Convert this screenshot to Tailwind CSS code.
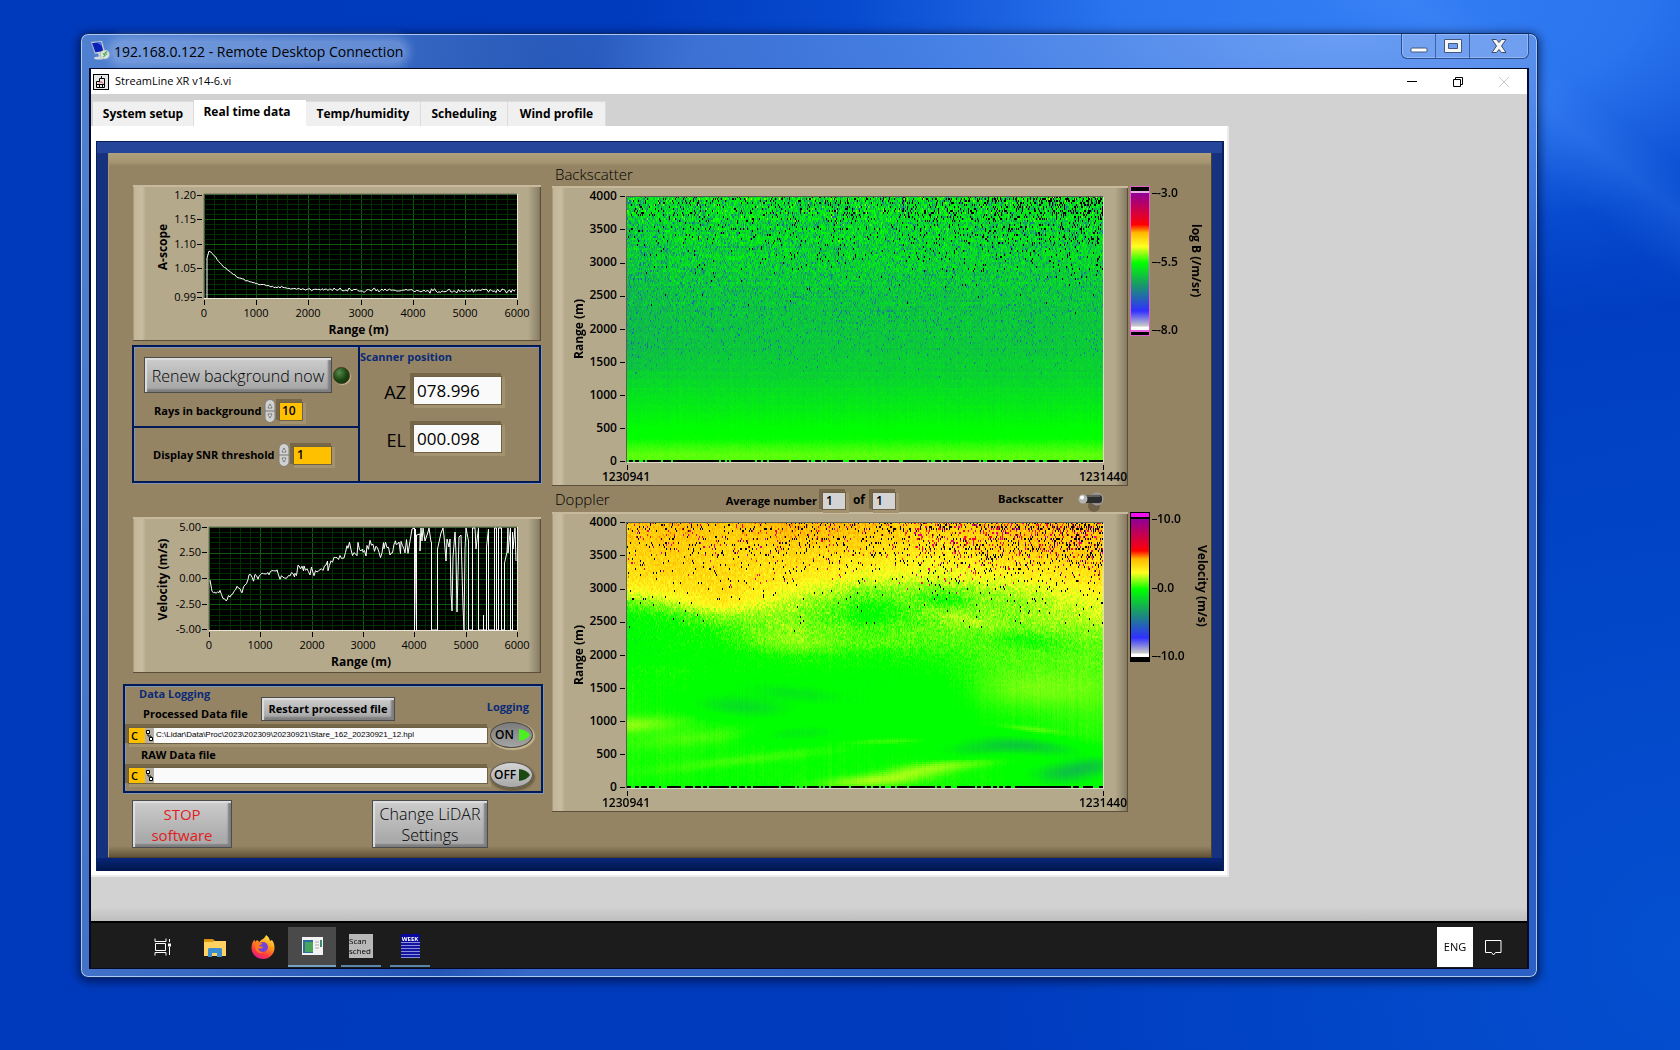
<!DOCTYPE html>
<html lang="en">
<head>
    <meta charset="UTF-8">
    <meta name="viewport" content="width=device-width, initial-scale=1.0">
    <title>192.168.0.122 - Remote Desktop Connection</title>
    <script src="https://cdn.jsdelivr.net/npm/@tailwindcss/browser@4"></script>
    <style>
        body {
            font-family: "Open Sans", "Noto Sans", sans-serif;
            background:
                linear-gradient(38deg, transparent 88%, rgba(80, 150, 255, 0.2) 91%, transparent 93%),
                radial-gradient(ellipse 760px 330px at 1380px 0, #347ef4 0%, #2a74ee 35%, rgba(10, 80, 214, 0.7) 70%, transparent 100%),
                radial-gradient(ellipse 700px 700px at 1680px 950px, #0450d0 0%, transparent 100%),
                linear-gradient(90deg, #003abc, #003cc0);
        }
        .glass {
            background:
                radial-gradient(ellipse 800px 260px at 1260px 0, #6a9ef4 0%, rgba(74, 132, 232, 0.9) 50%, transparent 100%),
                linear-gradient(100deg, #5080d0 0, #2456b8 32%, #3668c8 38%, #2a5fc4 60%, #2c60c4 100%);
        }
        .frame-blue {
            background: linear-gradient(#24459a, #24459a) top / 100% 12px no-repeat,
                linear-gradient(#08267a, #001648) bottom / 100% 13px no-repeat,
                #16317e;
            box-shadow: inset -2px 1px 0 #08205c, inset 1px 0 0 #08205c;
        }
        .panel-tan {
            background: linear-gradient(#b0a07c, #a59571 70%, #948464) top / 100% 13px no-repeat,
                linear-gradient(#948464, #5c4e34) bottom / 100% 12px no-repeat,
                #948464;
            box-shadow: inset -1px -1px 0 #4c422c, inset 1px 0 0 #a89874;
        }
        .plot-panel {
            background: linear-gradient(90deg, #c2b497, #c9bca1 70%, #b5a98c) left / 13px 100% no-repeat,
                linear-gradient(90deg, #b5a98c, #8d8369 80%, #736a54) right / 13px 100% no-repeat,
                #b5a98c;
            box-shadow: inset 0 2px 0 #c6b99c, inset -1px -1px 0 #5b4f3c, inset 1px 0 0 #a89a7c;
        }
        .recess {
            box-shadow: 0 0 0 1px #6f6144, -2px -2px 0 2px #756748, 2px 2px 0 2px #a39270;
        }
        .silver {
            background: linear-gradient(#cdcdcd, #a9a9a9 85%, #b8b8b8);
            border: 1px solid #4c4c4c;
            box-shadow: inset 2px 2px 1px #dedede, inset -3px -3px 2px #7e7e7e;
        }
        .blue-box {
            border: 2px solid #001a58;
            box-shadow: inset 1px 1px 0 #7e93b8, 1px 1px 0 #8497b4;
        }
        .vtext { writing-mode: vertical-rl; }
    </style>
</head>
<body class="min-h-screen flex pt-[33px] pl-20 pr-[142px] pb-[72px] text-black">

<main class="glass flex-1 flex flex-col rounded-lg border border-[#0c2a66] px-2 pb-2 shadow-[0_2px_10px_2px_rgba(0,0,30,0.55),inset_0_0_0_1px_#a9c8f5]">
    <!-- Remote desktop caption -->
    <header class="flex h-[34px] items-start">
        <svg class="ml-px mt-1.5 size-[20px]" viewBox="0 0 20 20">
            <path d="M1 2 12 1l3 11-10 2z" fill="#dfe6ee" stroke="#8898b0" stroke-width=".6"/>
            <path d="M2 3l9-1 2.400 9-8 1.500z" fill="#0a1fb4"/>
            <path d="M7 2.500l4-.4 1 4z" fill="#4a7cf0"/>
            <path d="M8 13l4-.6 1 4-4 1z" fill="#c8d0d8"/>
            <ellipse cx="9" cy="18" rx="5" ry="1.600" fill="#d4dae0"/>
            <circle cx="15" cy="14.500" r="4.500" fill="#e2ebe0" stroke="#98a89c" stroke-width=".6"/>
            <path d="M13 13.500l2 1.500-1.500 2M17 11.500l-2 1.500 2 1.500" fill="none" stroke="#38a038" stroke-width="1.200"/>
        </svg>
        <h1 class="ml-0.5 mt-[7px] rounded-full bg-[#a8c4f0]/40 px-0.5 text-[14px] leading-[22px] shadow-[0_0_8px_5px_rgba(168,196,240,0.4)]">192.168.0.122 - Remote Desktop Connection</h1>
        <div class="ml-auto flex h-[25px] rounded-b-md border border-t-0 border-[#2c4f92] bg-[#7fa9f2]/60 shadow-[inset_0_0_0_1px_#94b8f4]">
            <button class="grid w-[34px] place-items-center border-r border-[#3c62a8]" aria-label="Minimize">
                <svg class="size-[20px]" viewBox="0 0 20 20"><rect x="2" y="12" width="16" height="4" rx="1" fill="#fff" stroke="#46587a"/></svg>
            </button>
            <button class="grid w-[34px] place-items-center border-r border-[#3c62a8]" aria-label="Maximize">
                <svg class="size-[20px]" viewBox="0 0 20 20"><path d="M1.500 3.500h17v13h-17zM5.500 7.500v5h9v-5z" fill="#f4f6fa" fill-rule="evenodd" stroke="#46587a"/></svg>
            </button>
            <button class="grid w-[58px] place-items-center" aria-label="Close">
                <svg class="size-[20px]" viewBox="0 0 20 20"><path d="M3 3.500h4.500L10 6.500l2.500-3H17L12.500 10 17 16.500h-4.500L10 13.500l-2.500 3H3L7.500 10z" fill="#f4f4f4" stroke="#3c4c6c"/></svg>
            </button>
        </div>
    </header>

    <div class="flex flex-1 flex-col border-x-2 border-y border-[#000a28] bg-[#d2d2d2]">
        <!-- Application title bar -->
        <div class="flex h-[25px] items-center bg-white pl-0.5 text-[11px]">
            <svg class="size-[16px]" viewBox="0 0 16 16" fill="none" stroke="#000">
                <rect x=".5" y=".5" width="15" height="15" fill="#e8e8e8"/>
                <path d="M3.500 13.500v-6h3v-3h5v9zM3.500 10.500h8M8.500 4v-2M6.500 13v-2.500M9.500 13v-2.500"/>
                <path d="M6 9.500l2-2 2 2" stroke="#d03030"/>
            </svg>
            <span class="ml-1.5">StreamLine XR v14-6.vi</span>
            <button class="ml-auto mr-[34px] w-3" aria-label="Minimize window"><svg class="size-3" viewBox="0 0 12 12"><path d="M1 5.500h10" stroke="#000"/></svg></button>
            <button class="mr-[34px] w-3" aria-label="Restore window"><svg class="size-3" viewBox="0 0 12 12" fill="none" stroke="#000"><path d="M1.500 3.500h7v7h-7zM3.500 3.500v-2h7v7h-2"/></svg></button>
            <button class="mr-[17px] w-3" aria-label="Close window"><svg class="size-3" viewBox="0 0 12 12"><path d="M1 1l10 10M11 1L1 11" stroke="#ccc"/></svg></button>
        </div>

        <nav class="mt-1.5 flex h-[26px] items-end pl-[2px] text-[12px] font-bold">
            <button class="h-[25px] w-[101px] border-t border-r border-[#dcdcdc] bg-[#f0f0f0]">System setup</button>
            <button class="h-[26px] w-[112px] bg-white pb-0.5 pr-1.5">Real time data</button>
            <button class="h-[25px] w-[115px] border-t border-r border-[#dcdcdc] bg-[#f0f0f0]">Temp/humidity</button>
            <button class="h-[25px] w-[87px] border-t border-r border-[#dcdcdc] bg-[#f0f0f0]">Scheduling</button>
            <button class="h-[25px] w-[98px] border-t border-r border-[#dcdcdc] bg-[#f0f0f0]">Wind profile</button>
        </nav>

        <div class="w-fit border-r-2 border-b-2 border-[#ececec] bg-white pt-[15px] pr-[3px] pb-1 pl-[5px]">
            <div class="frame-blue px-3 pt-3 pb-[13px]">
                <div class="panel-tan flex pt-2.5 pb-2.5 pl-[15px]">
                    <!-- Left column -->
                    <div class="w-[420px] pt-[22px]">
                        <div class="plot-panel ml-[10px] w-[408px]">
                            <svg id="ascope" class="block h-[156px] w-full" viewBox="0 0 408 156"></svg>
                        </div>

                        <div class="blue-box mt-1 ml-[9px] flex h-[138px] w-[409px]">
                            <div class="w-[226px] border-r-2 border-[#001a58]">
                                <div class="h-[81px] border-b-2 border-[#001a58] pt-2.5 pl-2.5">
                                    <div class="flex items-center">
                                        <button class="silver h-[36px] w-[188px] pt-px text-[16px] font-light">Renew background now</button>
                                        <span class="ml-px size-[17px] rounded-full border border-[#3c3a22] bg-radial-[at_35%_30%] from-[#5a8a4c] via-[#1c4a14] to-[#0c2408] shadow-[1px_1px_1px_#c8b890]"></span>
                                    </div>
                                    <div class="mt-1.5 flex items-center pl-2.5">
                                        <label for="rays" class="w-[110px] whitespace-nowrap text-[11px] font-bold">Rays in background</label>
                                        <svg class="h-6 w-3" viewBox="0 0 12 24"><use href="#spinner"/></svg>
                                        <input id="rays" class="recess ml-1 h-[17px] w-[22px] bg-[#ffc000] pl-0.5 text-[12px] font-semibold" value="10">
                                    </div>
                                </div>
                                <div class="flex items-center pt-[15px] pl-[19px]">
                                    <label for="snr" class="w-[125px] whitespace-nowrap text-[11px] font-bold">Display SNR threshold</label>
                                    <svg class="h-6 w-3" viewBox="0 0 12 24"><use href="#spinner"/></svg>
                                    <input id="snr" class="recess ml-1 h-[17px] w-[37px] bg-[#ffc000] pl-[3px] text-[12px] font-semibold" value="1">
                                </div>
                            </div>
                            <div class="flex-1 pt-0.5">
                                <h2 class="text-[11px] font-bold leading-[16px] text-[#0a2a78]">Scanner position</h2>
                                <div class="mt-2.5 flex items-center">
                                    <label for="az" class="w-[54px] pr-2 pt-1 text-right text-[18px]">AZ</label>
                                    <input id="az" class="recess h-[27px] w-[87px] bg-[#fafafa] pl-[3px] text-[17px]" value="078.996">
                                </div>
                                <div class="mt-[17px] flex items-center">
                                    <label for="el" class="w-[54px] pr-2 pt-1 text-right text-[18px]">EL</label>
                                    <input id="el" class="recess h-[27px] w-[87px] bg-[#fafafa] pl-[3px] text-[17px]" value="000.098">
                                </div>
                            </div>
                        </div>

                        <div class="plot-panel mt-[34px] ml-[10px] w-[408px]">
                            <svg id="velocity" class="block h-[156px] w-full" viewBox="0 0 408 156"></svg>
                        </div>

                        <div class="blue-box mt-[11px] h-[109px] pl-1 text-[11px] font-bold leading-[16px]">
                            <div class="flex">
                                <div class="w-[132px]">
                                    <h2 class="pl-2.5 text-[#0a2a78]">Data Logging</h2>
                                    <label for="proc" class="mt-1 block whitespace-nowrap pl-3.5">Processed Data file</label>
                                </div>
                                <button class="silver mt-[11px] h-6 w-[134px] text-[11px] font-bold leading-[16px]">Restart processed file</button>
                                <span class="ml-auto mt-[13px] mr-3 text-[#0a2a78]">Logging</span>
                            </div>
                            <div class="flex items-center">
                                <div class="recess flex h-[15px] w-[358px]">
                                    <span class="w-4 bg-[#ffc000] pl-0.5 text-[11px] font-semibold">C</span>
                                    <svg class="h-[15px] w-[9px] bg-[#b4b0a4]" viewBox="0 0 9 15"><use href="#path-icon"/></svg>
                                    <input id="proc" class="min-w-0 flex-1 bg-[#fafafa] pl-0.5 font-['Liberation_Sans'] text-[8px] font-normal" value="C:\Lidar\Data\Proc\2023\202309\20230921\Stare_162_20230921_12.hpl">
                                </div>
                                <button class="ml-[3px] flex h-[26px] w-[43px] items-center rounded-[50%] border border-[#4c4a44] bg-linear-to-b from-[#7c7c7c] to-[#a4a4a4] pl-1 text-[12px] font-semibold shadow-[1px_1px_1px_1px_#c4b68e]">ON
                                    <svg class="ml-1 size-3" viewBox="0 0 12 12"><path d="M1 0Q9 1 12 6 9 11 1 12z" fill="#4cf020"/></svg>
                                </button>
                            </div>
                            <label for="raw" class="block -mt-px pl-3">RAW Data file</label>
                            <div class="-mt-px flex items-center">
                                <div class="recess flex h-[15px] w-[358px]">
                                    <span class="w-4 bg-[#ffc000] pl-0.5 text-[11px] font-semibold">C</span>
                                    <svg class="h-[15px] w-[9px] bg-[#b4b0a4]" viewBox="0 0 9 15"><use href="#path-icon"/></svg>
                                    <input id="raw" class="min-w-0 flex-1 bg-[#fafafa] pl-0.5 text-[8px]" value="">
                                </div>
                                <button class="ml-[3px] flex h-[26px] w-[43px] items-center rounded-[50%] border border-[#5c5a54] bg-linear-to-b from-[#d4d4d4] to-[#a8a8a8] pl-[3px] text-[12px] font-semibold shadow-[1px_2px_2px_1px_#6c5e42]">OFF
                                    <svg class="ml-0.5 size-3" viewBox="0 0 12 12"><path d="M1 0Q9 1 12 6 9 11 1 12z" fill="#1c4814"/></svg>
                                </button>
                            </div>
                        </div>

                        <div class="mt-[7px] flex justify-between pl-[9px] pr-[55px] text-[15px] leading-[21px]">
                            <button class="silver h-12 w-[100px] pt-0.5 text-[#e02020]">STOP<br>software</button>
                            <button class="silver h-12 w-[116px] pt-0.5 text-[16px] font-light">Change LiDAR<br>Settings</button>
                        </div>
                    </div>

                    <!-- Right column -->
                    <div class="ml-[9px] w-[576px]">
                        <h2 class="pl-[3px] text-[15px] leading-[23px] font-light">Backscatter</h2>
                        <div class="plot-panel h-[300px] pt-2.5">
                            <div class="flex h-[267px]">
                                <span class="vtext w-[37px] rotate-180 pr-[19px] text-center text-[12px] font-bold leading-[16px]">Range (m)</span>
                                <div class="-my-2 flex h-[281px] w-[37px] flex-col justify-between pr-px text-right text-[12px] font-semibold leading-[16px]">
                                    <span>4000 <i class="inline-block h-px w-[5px] bg-black align-middle"></i></span>
                                    <span>3500 <i class="inline-block h-px w-[5px] bg-black align-middle"></i></span>
                                    <span>3000 <i class="inline-block h-px w-[5px] bg-black align-middle"></i></span>
                                    <span>2500 <i class="inline-block h-px w-[5px] bg-black align-middle"></i></span>
                                    <span>2000 <i class="inline-block h-px w-[5px] bg-black align-middle"></i></span>
                                    <span>1500 <i class="inline-block h-px w-[5px] bg-black align-middle"></i></span>
                                    <span>1000 <i class="inline-block h-px w-[5px] bg-black align-middle"></i></span>
                                    <span>500 <i class="inline-block h-px w-[5px] bg-black align-middle"></i></span>
                                    <span>0 <i class="inline-block h-px w-[5px] bg-black align-middle"></i></span>
                                </div>
                                <canvas id="backscatter-map" width="476" height="265" class="h-[267px] w-[478px] border-t border-l border-t-[#56604c] border-l-[#56604c] border-r border-b border-r-[#dcdccc] border-b-[#dcdccc]"></canvas>
                            </div>
                            <div class="mt-0.5 flex justify-between pl-[75px] pr-6"><i class="h-[5px] w-px bg-black"></i><i class="h-[5px] w-px bg-black"></i></div>
                            <div class="flex justify-between pl-[50px] pr-px text-[12px] font-semibold leading-[14px]"><span>1230941</span><span>1231440</span></div>
                        </div>

                        <div class="flex h-[26px] items-center pl-[3px]">
                            <h2 class="text-[15px] leading-[23px] font-light">Doppler</h2>
                            <label for="avg" class="ml-auto mr-1.5 whitespace-nowrap pt-1 text-[11px] font-bold">Average number</label>
                            <input id="avg" class="recess mt-1 h-[16px] w-[22px] bg-[#d4d4d4] pl-[3px] text-[12px] font-semibold" value="1">
                            <label for="avg-of" class="mx-2 pt-0.5 text-[12px] font-bold leading-[16px]">of</label>
                            <input id="avg-of" class="recess mt-1 h-[16px] w-[22px] bg-[#d4d4d4] pl-[3px] text-[12px] font-semibold" value="1">
                            <label for="mode" class="ml-[103px] w-[66px] whitespace-nowrap text-[11px] font-bold">Backscatter</label>
                            <button id="mode" class="ml-3.5 mr-[23px]" aria-label="Backscatter">
                                <svg class="mt-1 h-[24px] w-[27px]" viewBox="0 0 27 24">
                                    <ellipse cx="16" cy="17" rx="6" ry="6" fill="#6f6249"/>
                                    <circle cx="19" cy="10" r="6" fill="#8c8c8c" stroke="#a4a4a4"/>
                                    <rect x="4" y="6" width="20" height="8" rx="3" fill="#2c2c2c"/>
                                    <path d="M5 7h17" stroke="#606060" stroke-width="2"/>
                                    <circle cx="5" cy="10" r="4.500" fill="#b4b4b4"/><circle cx="4" cy="8.500" r="2" fill="#fff"/>
                                </svg>
                            </button>
                        </div>

                        <div class="plot-panel h-[300px] pt-2.5">
                            <div class="flex h-[267px]">
                                <span class="vtext w-[37px] rotate-180 pr-[19px] text-center text-[12px] font-bold leading-[16px]">Range (m)</span>
                                <div class="-my-2 flex h-[281px] w-[37px] flex-col justify-between pr-px text-right text-[12px] font-semibold leading-[16px]">
                                    <span>4000 <i class="inline-block h-px w-[5px] bg-black align-middle"></i></span>
                                    <span>3500 <i class="inline-block h-px w-[5px] bg-black align-middle"></i></span>
                                    <span>3000 <i class="inline-block h-px w-[5px] bg-black align-middle"></i></span>
                                    <span>2500 <i class="inline-block h-px w-[5px] bg-black align-middle"></i></span>
                                    <span>2000 <i class="inline-block h-px w-[5px] bg-black align-middle"></i></span>
                                    <span>1500 <i class="inline-block h-px w-[5px] bg-black align-middle"></i></span>
                                    <span>1000 <i class="inline-block h-px w-[5px] bg-black align-middle"></i></span>
                                    <span>500 <i class="inline-block h-px w-[5px] bg-black align-middle"></i></span>
                                    <span>0 <i class="inline-block h-px w-[5px] bg-black align-middle"></i></span>
                                </div>
                                <canvas id="doppler-map" width="476" height="265" class="h-[267px] w-[478px] border-t border-l border-t-[#56604c] border-l-[#56604c] border-r border-b border-r-[#dcdccc] border-b-[#dcdccc]"></canvas>
                            </div>
                            <div class="mt-0.5 flex justify-between pl-[75px] pr-6"><i class="h-[5px] w-px bg-black"></i><i class="h-[5px] w-px bg-black"></i></div>
                            <div class="flex justify-between pl-[50px] pr-px text-[12px] font-semibold leading-[14px]"><span>1230941</span><span>1231440</span></div>
                        </div>
                    </div>

                    <!-- Colour scales -->
                    <div class="w-[84px] pt-[23px] pl-0.5 text-[12px] font-semibold leading-[16px]">
                        <div class="flex h-[326px]">
                            <div class="h-[150px] w-5 border border-[#e060d0] bg-black pt-1 pb-[3px]">
                                <div class="h-full border-y-2 border-t-[#e8b0e0] border-b-[#e860d8] bg-[linear-gradient(#900098,#f00018_20%,#ff0000_23%,#ffb800_29%,#ffff20_39%,#00ff00_51%,#18a060_66%,#3030ff_86%,#c8c8c8_97%,#fff_98%)]"></div>
                            </div>
                            <div class="-mt-px flex h-[153px] w-[38px] flex-col justify-between pl-0.5">
                                <span><i class="inline-block h-px w-[5px] bg-black align-middle"></i>-3.0</span>
                                <span><i class="inline-block h-px w-[5px] bg-black align-middle"></i>-5.5</span>
                                <span><i class="inline-block h-px w-[5px] bg-black align-middle"></i>-8.0</span>
                            </div>
                            <span class="vtext mt-[38px] text-[12px] font-bold leading-[16px]">log B (/m/sr)</span>
                        </div>
                        <div class="flex">
                            <div class="h-[150px] w-5 border border-black bg-black pb-1">
                                <div class="h-1 bg-[#f010f0]"></div>
                                <div class="mt-0.5 h-[138px] bg-[linear-gradient(#900098,#f00018_20%,#ff0000_23%,#ffb800_29%,#ffff20_39%,#00ff00_51%,#18a060_66%,#3030ff_86%,#c8c8c8_97%,#fff_98%)]"></div>
                            </div>
                            <div class="-mt-px flex h-[153px] w-[44px] flex-col justify-between whitespace-nowrap pl-0.5">
                                <span><i class="inline-block h-px w-[5px] bg-black align-middle"></i>10.0</span>
                                <span><i class="inline-block h-px w-[5px] bg-black align-middle"></i>0.0</span>
                                <span><i class="inline-block h-px w-[5px] bg-black align-middle"></i>-10.0</span>
                            </div>
                            <span class="vtext mt-[33px] whitespace-nowrap text-[12px] font-bold leading-[16px]">Velocity (m/s)</span>
                        </div>
                    </div>
                </div>
            </div>
        </div>
        <div class="mt-auto h-3.5 bg-linear-to-b from-[#d2d2d2] to-[#bebebe]"></div>

        <!-- Taskbar -->
        <footer class="flex h-[47px] gap-px border-t-2 border-black bg-[#1c1c1c] pt-1 pl-12">
            <button class="grid h-10 w-12 place-items-center" aria-label="Task view">
                <svg class="size-[18px]" viewBox="0 0 18 18" fill="none" stroke="#fff"><path d="M1 .5v3h11v-3M1 17.500v-3h11v3M1.500 5.500h10v7h-10zM15.500 1v3M15.500 9v8"/><path d="M14 5.500h3v3h-3z" fill="#fff" stroke="none"/></svg>
            </button>
            <button class="ml-0.5 grid h-10 w-12 place-items-center" aria-label="File Explorer">
                <svg class="h-[19px] w-[23px]" viewBox="0 0 23 19"><path d="M1 1h9l2 2h-11z" fill="#d08a10"/><path d="M1 3h22v15H1z" fill="#ffd262"/><path d="M1 2h8l2 2H1z" fill="#e09b10"/><path d="M5 19v-8l1-1h12l1 1v8h-5v-4h-5v4z" fill="#3c8ed0"/></svg>
            </button>
            <button class="grid h-10 w-12 place-items-center" aria-label="Firefox">
                <svg class="size-6" viewBox="0 0 24 24">
                    <defs><linearGradient id="fox" x1=".8" y1="0" x2=".3" y2="1"><stop offset="0" stop-color="#fff04a"/><stop offset=".4" stop-color="#ff9a1c"/><stop offset=".75" stop-color="#ff3b3f"/><stop offset="1" stop-color="#e01890"/></linearGradient></defs>
                    <path d="M15 0c3 2 3.500 4 4 6l2-1c2 3 2.500 5 2.500 8A11.500 11 0 0 1 .5 13C.5 9 2 6 3.500 4.500L4 7l2-2 2.500 2C10 4 14 4 15 0z" fill="url(#fox)"/>
                    <circle cx="12" cy="12" r="5" fill="#7244d8"/><path d="M4 8c3-2 5-1 8 1-2 0-3 1-4 2 2 1 3 0 4 1-1 2-4 2-5 1 0 3 3 5 6 4-4 3-10 0-9-9z" fill="#ff7a1c"/>
                </svg>
            </button>
            <button class="grid h-10 w-12 place-items-center border-b-2 border-[#76a0c4] bg-[#4a4a4a]" aria-label="StreamLine">
                <svg class="h-[18px] w-[21px]" viewBox="0 0 21 18"><path d="M0 0h21v18H0z" fill="#f2f2f2"/><path d="M1 3h10v13H1z" fill="#2c6ca0"/><path d="M3 5h8v10H3z" fill="#4aa45c"/><path d="M13 5h4M13 8h4M13 11h4" stroke="#aaa"/><path d="M18 3h2v7h-2z" fill="#3c8c70"/></svg>
            </button>
            <button class="ml-1 grid h-10 w-10 place-items-center border-b-2 border-[#5c84a8]" aria-label="Scan sched">
                <span class="h-6 w-6 bg-[#b8b8b8] pt-0.5 text-left text-[8px] leading-[10px]">Scan<br>sched</span>
            </button>
            <button class="ml-2 grid h-10 w-10 place-items-center border-b-2 border-[#5c84a8]" aria-label="Week">
                <span class="h-6 w-[19px] bg-[linear-gradient(#0808a0_35%,transparent_35%),repeating-linear-gradient(#1414a0_0_2px,#8890d8_2px_3px)] text-center text-[6px] font-bold leading-[10px] text-white">WEEK</span>
            </button>
            <button class="ml-auto h-10 w-9 bg-white text-[11px]">ENG</button>
            <button class="mr-[7px] grid h-10 w-[46px] place-items-center pr-2" aria-label="Notifications">
                <svg class="size-[17px]" viewBox="0 0 17 17" fill="none" stroke="#fff"><path d="M.5 1.500h15.500v12h-5.500l-2 2.500-2-2.500H.5z"/></svg>
            </button>
        </footer>
    </div>
</main>

<svg class="hidden">
    <symbol id="spinner" viewBox="0 0 12 24">
        <rect x="1" y=".5" width="10" height="23" rx="5" fill="#d0d0d0" stroke="#807c74"/>
        <path d="M1 12h10" stroke="#777"/>
        <path d="M4 9l2-4 2 4zM4 15l2 4 2-4z" fill="#eee" stroke="#555" stroke-width=".7"/>
    </symbol>
    <symbol id="path-icon" viewBox="0 0 9 15">
        <path d="M1.500 2.500h3v3h-3zM4.500 9.500h3v3h-3zM3 5.500v2.500h3v1.500" fill="#fff" stroke="#000"/>
    </symbol>
</svg>

<script>
    // Small seeded generator so the traces are stable between loads
    let seed = 20230921;
    function rnd() {
        seed = (seed * 1664525 + 1013904223) >>> 0;
        return seed / 4294967296;
    }
    const gauss = () => rnd() + rnd() + rnd() + rnd() - 2;

    function drawChart(id, opt) {
        const { x0, x1, y0, y1 } = opt;
        let out = `<rect x="${x0}" y="${y0}" width="${x1 - x0}" height="${y1 - y0}" fill="#000"/>`;
        for (let i = 0; i <= 30; i++) {
            const x = Math.round(x0 + (x1 - x0) * i / 30) + 0.5;
            out += `<path d="M${x} ${y0}V${y1}" stroke="${i % 5 ? '#003000' : '#0c5c14'}"/>`;
        }
        for (let i = 0; i * opt.minor < y1 - y0; i++) {
            const y = Math.round(y0 + opt.minor * i) + 0.5;
            out += `<path d="M${x0} ${y}H${x1}" stroke="${i % 5 ? '#003000' : '#0c5c14'}"/>`;
        }
        out += `<path d="M${x0} ${y1}V${y0}H${x1}" fill="none" stroke="#6c6858"/><path d="M${x0} ${y1 + 0.5}H${x1 + 0.5}V${y0}" fill="none" stroke="#ece6d6"/>`;
        out += opt.labels.map(([y, t]) => `<text x="${x0 - 8}" y="${y + 4}" text-anchor="end">${t}</text><path d="M${x0 - 7} ${y + 0.5}h5" stroke="#000"/>`).join('');
        for (let i = 0; i <= 6; i++) {
            const x = Math.round(x0 + (x1 - x0) * i / 6);
            out += `<path d="M${x + 0.5} ${y1 + 2}v5" stroke="#000"/><text x="${x}" y="${y1 + 19}" text-anchor="middle">${i * 1000}</text>`;
        }
        out += `<text x="${(x0 + x1) / 2 - 2}" y="149" text-anchor="middle" font-weight="700" font-size="12">Range (m)</text>`;
        out += `<text transform="translate(34 ${(y0 + y1) / 2 + 1}) rotate(-90)" text-anchor="middle" font-weight="700" font-size="12">${opt.title}</text>`;
        const pts = opt.points.map(([x, y]) => `${(x0 + x).toFixed(1)},${Math.max(y0 + 1, Math.min(y1, y0 + y)).toFixed(1)}`).join(' ');
        out += `<polyline points="${pts}" fill="none" stroke="#fff"/>`;
        const svg = document.getElementById(id);
        svg.setAttribute('font-size', '11');
        svg.innerHTML = out;
    }

    const scope = [[3, 104], [3, 64], [5, 57]];
    for (let x = 7; x < 312; x += 1.5) {
        scope.push([x, 97 - 40 * Math.exp(-(x - 5) / 24) + gauss() * Math.min(1.6, 0.6 + x / 150) - 3 * Math.exp(-x / 100)]);
    }
    drawChart('ascope', {
        x0: 71, x1: 384, y0: 9, y1: 113, minor: 5, title: 'A-scope', points: scope,
        labels: [[10, '1.20'], [34, '1.15'], [59, '1.10'], [83, '1.05'], [112, '0.99'], [107, '']]
    });

    // Mean velocity up to 4 km, then saturated swings
    const mean = [[1, 53], [3, 64], [7, 67], [11, 64], [14, 72], [18, 72], [22, 69], [28, 60], [33, 65], [40, 50], [50, 49], [60, 46],
        [68, 43], [71, 51], [78, 51], [86, 49], [90, 39], [95, 41], [105, 46], [114, 40], [119, 37], [128, 31], [135, 30], [139, 19], [145, 31], [149, 20],
        [154, 28], [158, 22], [164, 21], [170, 27], [175, 19], [182, 24], [187, 15], [192, 20], [196, 22], [200, 13]];
    const vel = [];
    for (let i = 1; i < mean.length; i++) {
        const [ax, ay] = mean[i - 1], [bx, by] = mean[i];
        for (let x = ax; x < bx; x += 1.5) {
            vel.push([x, ay + (by - ay) * (x - ax) / (bx - ax) + gauss() * (1 + x / 26)]);
        }
    }
    vel.push(...[[203, 2], [205.5, 0], [205.5, 104], [206.5, 2], [207.5, 104], [207.5, 8], [211, 7], [211, 24], [212, 0], [213, 14], [214, 0], [216, 14],
        [219, 5], [220, 0], [222, 15], [222.5, 15], [222.5, 104], [228.5, 104], [228.5, 22], [232, 6], [234, 0], [235, 9], [237, 34], [238, 12],
        [240, 20], [241, 12], [242, 66], [243, 84], [244, 30], [246, 5], [247, 26], [248, 85], [250, 10], [252, 8], [254, 80], [255, 104],
        [256, 22], [257, 1], [259.5, 14], [259.5, 104], [263.5, 104], [263.5, 0], [266, 0], [267, 22], [269.5, 0], [269.5, 104], [274.5, 104], [274.5, 88], [274.5, 104], [277.5, 104], [277.5, 20],
        [279.5, 2], [279.5, 104], [285.5, 104], [285.5, 0], [287.5, 0], [287.5, 104], [289.5, 104], [289.5, 0], [292.5, 0], [292.5, 104], [295.5, 104], [295.5, 36], [298, 25],
        [299, 0], [299, 26], [301.5, 0], [301.5, 104], [303.5, 104], [303.5, 5], [304, 22], [306, 0], [307, 34]]);
    drawChart('velocity', {
        x0: 76, x1: 384, y0: 10, y1: 113, minor: 5.15, title: 'Velocity (m/s)', points: vel,
        labels: [[10, '5.00'], [35, '2.50'], [61, '0.00'], [87, '-2.50'], [112, '-5.00']]
    });

    const stops = [[0, 208, 208, 208], [0.14, 48, 48, 255], [0.33, 24, 140, 125], [0.49, 0, 255, 0], [0.51, 0, 255, 0], [0.54, 80, 255, 10], [0.61, 255, 255, 32], [0.71, 255, 184, 0],
        [0.78, 255, 0, 0], [1, 220, 0, 200]];
    function colour(t) {
        t = Math.max(0, Math.min(1, t));
        let i = 1;
        while (i < stops.length - 1 && t > stops[i][0]) i++;
        const a = stops[i - 1], b = stops[i], k = (t - a[0]) / (b[0] - a[0]);
        return [1, 2, 3].map(c => a[c] + (b[c] - a[c]) * k);
    }
    function lerp(xs, ys, x) {
        let i = 1;
        while (i < xs.length - 1 && x > xs[i]) i++;
        const k = Math.max(0, Math.min(1, (x - xs[i - 1]) / (xs[i] - xs[i - 1])));
        return ys[i - 1] + (ys[i] - ys[i - 1]) * k;
    }

    // Cells are one ray wide and one 30 m gate (2 px) tall; null means below the SNR threshold
    function drawMap(id, cell) {
        const ctx = document.getElementById(id).getContext('2d');
        const img = ctx.createImageData(476, 265);
        const streak = Array.from({ length: 476 }, gauss);
        const ground = Array.from({ length: 240 }, () => rnd() < 0.78 ? null : 0.48);
        for (let r = 0; r < 133; r++) {
            const h = 1 - r / 133, rowNoise = gauss();
            for (let c = 0; c < 476; c++) {
                const t = r >= 132 ? ground[c >> 1] : cell(c / 476, h, streak[c], rowNoise);
                const [R, G, B] = t === null ? [0, 0, 0] : colour(t);
                for (let k = 0; k < 2; k++) {
                    const y = r * 2 + k - 1;
                    if (y < 0) continue;
                    const p = (y * 476 + c) * 4;
                    img.data[p] = R; img.data[p + 1] = G; img.data[p + 2] = B; img.data[p + 3] = 255;
                }
            }
        }
        ctx.putImageData(img, 0, 0);
    }
    const gapChance = (x, h) => h < 0.5 ? 0 : Math.pow((h - 0.5) * 2, 2.6) * (x > 0.55 ? 0.1 + (x - 0.55) * 0.4 : 0.1);

    drawMap('backscatter-map', (x, h, s, row) => {
        if (rnd() < gapChance(x, h) * (1 + row * 0.6)) return null;
        const base = lerp([0, 0.03, 0.06, 0.1, 0.13, 0.2, 0.35, 0.55, 0.75, 1], [0.54, 0.545, 0.53, 0.508, 0.49, 0.465, 0.425, 0.41, 0.435, 0.46], h);
        const left = h > 0.35 ? -0.02 * Math.exp(-x * 8) : 0;
        const dip = h > 0.3 && rnd() < (h - 0.3) * 0.35 ? -rnd() * 0.16 : 0;
        return base + left + dip + gauss() * (0.004 + 0.08 * h * h) + s * (h > 0.1 ? 0.005 : 0.002) + row * 0.016 * h;
    });

    const hs = [0, 0.2, 0.4, 0.5, 0.55, 0.6, 0.65, 0.7, 0.75, 0.8, 0.9, 1];
    const cols = [0, 0.1, 0.2, 0.35, 0.5, 0.65, 0.8, 1];
    const profiles = [
        [0.515, 0.52, 0.515, 0.49, 0.49, 0.49, 0.50, 0.54, 0.62, 0.65, 0.67, 0.69],
        [0.515, 0.52, 0.51, 0.50, 0.50, 0.50, 0.52, 0.59, 0.64, 0.66, 0.68, 0.70],
        [0.51, 0.515, 0.50, 0.50, 0.505, 0.51, 0.56, 0.64, 0.66, 0.66, 0.66, 0.69],
        [0.515, 0.51, 0.50, 0.51, 0.55, 0.56, 0.56, 0.58, 0.61, 0.64, 0.67, 0.71],
        [0.515, 0.505, 0.49, 0.51, 0.54, 0.54, 0.52, 0.53, 0.56, 0.61, 0.66, 0.70],
        [0.52, 0.50, 0.50, 0.52, 0.54, 0.55, 0.55, 0.55, 0.56, 0.60, 0.64, 0.67],
        [0.51, 0.505, 0.535, 0.54, 0.54, 0.55, 0.56, 0.56, 0.58, 0.62, 0.67, 0.69],
        [0.50, 0.525, 0.545, 0.545, 0.55, 0.57, 0.59, 0.61, 0.63, 0.65, 0.68, 0.69]
    ];
    // x, height, half width, half height, slope, strength
    const blobs = [
        [0, 0.24, 0.1, 0.03, 0.08, 0.045], [0.2, 0.2, 0.2, 0.03, 0.15, 0.02], [0.25, 0.11, 0.2, 0.02, 0.2, 0.02],
        [0.24, 0.31, 0.1, 0.04, -0.12, -0.06], [0.35, 0.21, 0.1, 0.03, 0.1, -0.05], [0.35, 0.36, 0.1, 0.03, -0.2, -0.04],
        [0.58, 0.05, 0.11, 0.03, 0.28, 0.05], [0.68, 0.09, 0.1, 0.02, 0.15, 0.03], [0.48, 0.03, 0.08, 0.02, 0.1, 0.03],
        [0.86, 0.37, 0.12, 0.06, -0.05, 0.02], [0.85, 0.16, 0.1, 0.03, -0.15, -0.08], [0.92, 0.06, 0.07, 0.04, 0.1, -0.09],
        [0.74, 0.15, 0.08, 0.03, 0.1, -0.05], [0.98, 0.09, 0.05, 0.03, 0.1, -0.06], [0.85, 0.225, 0.06, 0.01, -0.2, 0.03],
        [0.3, 0.56, 0.14, 0.06, -0.35, 0.02], [0.7, 0.64, 0.09, 0.03, -0.5, 0.025], [0.67, 0.71, 0.05, 0.03, 0, -0.04], [0.52, 0.66, 0.07, 0.05, 0, -0.02],
        [0.55, 0.18, 0.08, 0.01, 0.05, 0.025], [0.05, 0.45, 0.1, 0.02, -0.1, 0.01], [0.84, 0.56, 0.08, 0.03, -0.2, -0.03]
    ];
    drawMap('doppler-map', (x, h, s, row) => {
        if (rnd() < gapChance(x, h) * (1 + row * 0.6)) return null;
        if (h > 0.72 && rnd() < Math.pow((h - 0.72) * 3.5, 1.5) * (x > 0.6 ? 0.24 : 0.06)) return 0.7 + rnd() * 0.3;
        let t = lerp(cols, profiles.map(p => lerp(hs, p, h)), x);
        for (const [bx, bh, w, v, slope, a] of blobs) {
            const dx = x - bx, dy = h - bh - slope * dx;
            t += a * Math.exp(-dx * dx / (w * w) - dy * dy / (v * v));
        }
        return t + gauss() * (h > 0.35 ? 0.004 + Math.min(0.3, h - 0.35) * 0.08 : 0.004) + s * 0.005;
    });
</script>
</body>
</html>
